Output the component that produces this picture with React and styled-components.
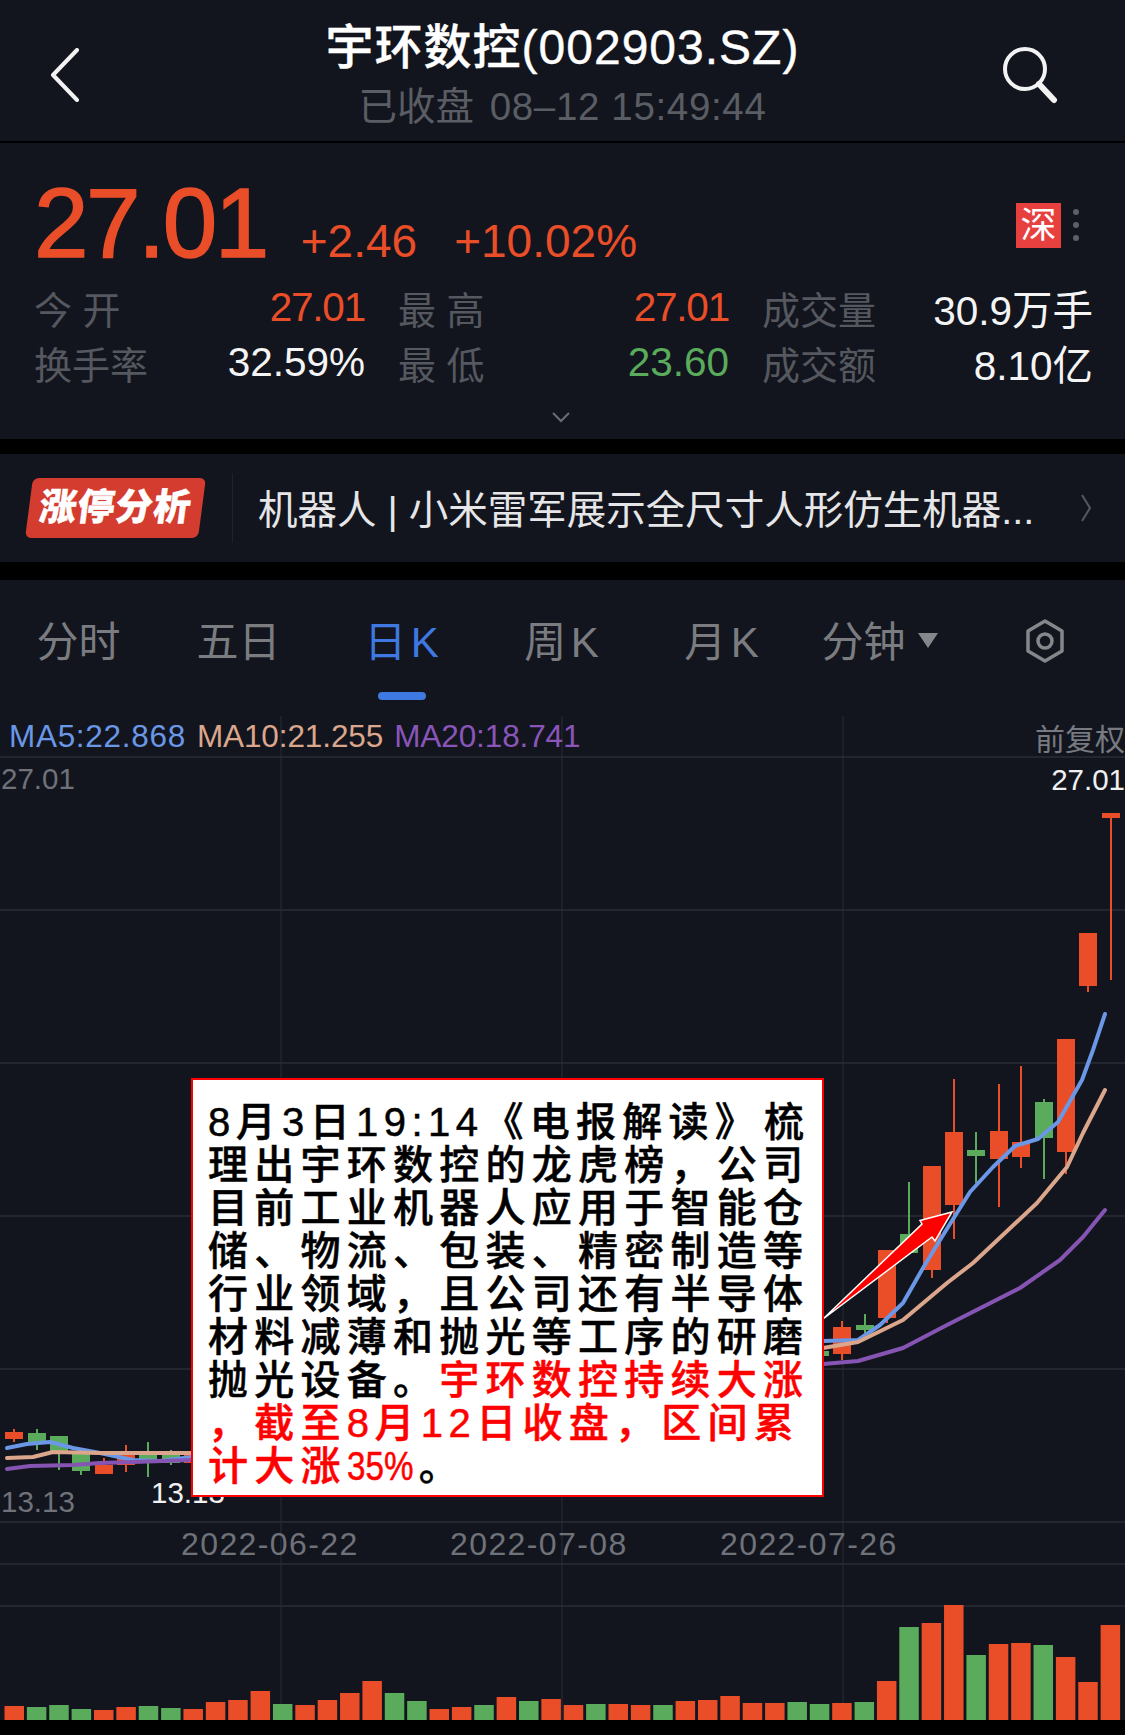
import React from 'react';
import styled, { createGlobalStyle } from 'styled-components';

const BG = '#12151e';
const RED = '#e94e29';
const GREEN = '#5aab5b';
const GRID = '#2a2d35';
const CJK = '"Liberation Sans", "Noto Sans CJK SC", sans-serif';

const GlobalStyle = createGlobalStyle`
  html, body { margin: 0; padding: 0; background: #000; }
  * { box-sizing: border-box; }
`;

// 蜡烛图数据: [中心x, 实体上, 实体下, 影线上, 影线下, 颜色]
const candles = [
  [14, 1432, 1439, 1429, 1442, RED],
  [37, 1433, 1443, 1429, 1450, GREEN],
  [59, 1436, 1451, 1436, 1470, GREEN],
  [81, 1454, 1471, 1454, 1475, GREEN],
  [104, 1465, 1474, 1458, 1474, RED],
  [126, 1453, 1465, 1445, 1472, RED],
  [148, 1453, 1459, 1442, 1477, GREEN],
  [171, 1455, 1463, 1450, 1465, GREEN],
  [193, 1454, 1463, 1450, 1465, RED],
  [820, 1351, 1356, 1351, 1356, GREEN],
  [842, 1327, 1354, 1321, 1360, RED],
  [865, 1325, 1330, 1314, 1333, GREEN],
  [887, 1250, 1318, 1250, 1323, RED],
  [909, 1234, 1253, 1182, 1253, GREEN],
  [932, 1166, 1270, 1166, 1278, RED],
  [954, 1132, 1205, 1079, 1239, RED],
  [976, 1150, 1156, 1132, 1183, GREEN],
  [999, 1131, 1159, 1084, 1207, RED],
  [1021, 1142, 1157, 1066, 1168, RED],
  [1044, 1102, 1138, 1099, 1179, GREEN],
  [1066, 1039, 1152, 1039, 1174, RED],
  [1088, 933, 986, 933, 992, RED],
  [1111, 813, 818, 813, 980, RED],
];

// 成交量: [柱顶y, 颜色]
const volumes = [
  [1706, RED], [1707, GREEN], [1705, GREEN], [1709, GREEN], [1710, RED],
  [1707, RED], [1706, GREEN], [1708, GREEN], [1709, RED], [1702, RED],
  [1700, RED], [1691, RED], [1704, GREEN], [1705, RED], [1700, RED],
  [1693, RED], [1681, RED], [1693, GREEN], [1701, GREEN], [1709, RED],
  [1707, RED], [1705, GREEN], [1697, RED], [1701, GREEN], [1699, RED],
  [1705, RED], [1704, GREEN], [1704, RED], [1705, RED], [1705, GREEN],
  [1701, RED], [1700, RED], [1696, RED], [1703, RED], [1703, RED],
  [1702, GREEN], [1704, GREEN], [1703, RED], [1702, GREEN], [1681, RED],
  [1627, GREEN], [1623, RED], [1605, RED], [1655, GREEN], [1644, RED],
  [1643, RED], [1645, GREEN], [1657, RED], [1682, RED], [1625, RED],
];

const lines = [
  {
    color: '#6a97e6',
    left: '7,1448 27,1444 50,1442 73,1448 100,1453 133,1460 160,1461 192,1457',
    right: '823,1341 858,1340 880,1325 903,1303 923,1268 940,1240 970,1192 993,1167 1015,1146 1038,1139 1058,1122 1082,1080 1093,1050 1105,1014',
  },
  {
    color: '#dba68b',
    left: '7,1458 33,1457 53,1452 100,1453 192,1453',
    right: '823,1348 858,1342 903,1320 947,1283 973,1263 1037,1203 1067,1167 1083,1133 1105,1090',
  },
  {
    color: '#8655b4',
    left: '7,1469 30,1466 73,1465 100,1463 133,1462 192,1460',
    right: '823,1364 858,1361 903,1348 947,1325 1020,1288 1060,1260 1083,1237 1105,1210',
  },
];

function BackIcon() {
  return (
    <svg width="30" height="54" viewBox="0 0 30 54" fill="none">
      <path d="M27 2 L3 27 L27 52" stroke="#f2f2f2" strokeWidth="4" strokeLinecap="round" strokeLinejoin="round" />
    </svg>
  );
}

function SearchIcon() {
  return (
    <svg width="56" height="58" viewBox="0 0 56 58" fill="none">
      <circle cx="23" cy="23" r="20" stroke="#f2f2f2" strokeWidth="4" />
      <path d="M37 38 L52 54" stroke="#f2f2f2" strokeWidth="6" strokeLinecap="round" />
    </svg>
  );
}

function SettingsIcon() {
  return (
    <svg width="40" height="44" viewBox="0 0 40 44" fill="none">
      <path d="M20 2 L37 12 L37 32 L20 42 L3 32 L3 12 Z" stroke="#85878b" strokeWidth="3.5" strokeLinejoin="round" />
      <circle cx="20" cy="22" r="7" stroke="#85878b" strokeWidth="3.5" />
    </svg>
  );
}

function ChartDrawing() {
  return (
    <ChartSvg viewBox="0 716 1125 1004" width="1125" height="1004">
      {[757, 910, 1063, 1216, 1369, 1522, 1564, 1606].map((y) => (
        <line key={y} x1="0" x2="1125" y1={y} y2={y} stroke={GRID} strokeWidth="1.5" />
      ))}
      {[281, 562, 843].map((x) => (
        <line key={x} x1={x} x2={x} y1="716" y2="1720" stroke={GRID} strokeWidth="1" />
      ))}
      {candles.map(([cx, top, bottom, hi, lo, color]) => (
        <g key={cx}>
          <line x1={cx} x2={cx} y1={hi} y2={lo} stroke={color} strokeWidth="2" />
          <rect x={cx - 9} y={top} width="18" height={bottom - top} fill={color} />
        </g>
      ))}
      {lines.map((l) => (
        <g key={l.color} fill="none" stroke={l.color} strokeWidth="4" strokeLinejoin="round" strokeLinecap="round">
          <polyline points={l.left} />
          <polyline points={l.right} />
        </g>
      ))}
      {volumes.map(([top, color], i) => (
        <rect key={i} x={4.5 + i * 22.37} y={top} width="19.5" height={1720 - top} fill={color} />
      ))}
      <polygon
        points="823,1319 922,1224 920,1220.5 952,1212 935,1241 932,1237"
        fill="#f00"
        stroke="#fff"
        strokeWidth="1.5"
        strokeLinejoin="miter"
      />
    </ChartSvg>
  );
}

function App() {
  return (
    <Page>
      <GlobalStyle />
      <Header>
        <BackSlot><BackIcon /></BackSlot>
        <TitleBlock>
          <Title>宇环数控(002903.SZ)</Title>
          <SubTitle>已收盘 <SubTime>08–12 15:49:44</SubTime></SubTitle>
        </TitleBlock>
        <SearchSlot><SearchIcon /></SearchSlot>
      </Header>

      <Quote>
        <PriceRow>
          <Price>27.01</Price>
          <Change>+2.46</Change>
          <Change>+10.02%</Change>
          <MarketBadge>深</MarketBadge>
          <Dots><i /><i /><i /></Dots>
        </PriceRow>
        <StatGrid>
          <Stat><StatLabel>今 开</StatLabel><StatValue $color={RED} $tight>27.01</StatValue></Stat>
          <Stat><StatLabel>最 高</StatLabel><StatValue $color={RED} $tight>27.01</StatValue></Stat>
          <Stat><StatLabel>成交量</StatLabel><StatValue>30.9万手</StatValue></Stat>
          <Stat><StatLabel>换手率</StatLabel><StatValue>32.59%</StatValue></Stat>
          <Stat><StatLabel>最 低</StatLabel><StatValue $color={GREEN}>23.60</StatValue></Stat>
          <Stat><StatLabel>成交额</StatLabel><StatValue>8.10亿</StatValue></Stat>
        </StatGrid>
        <ExpandRow>
          <svg width="20" height="12" viewBox="0 0 20 12" fill="none">
            <path d="M2 2 L10 10 L18 2" stroke="#6b6e74" strokeWidth="2" />
          </svg>
        </ExpandRow>
      </Quote>

      <Banner>
        <BannerBadge><span>涨停分析</span></BannerBadge>
        <BannerDivider />
        <BannerText>机器人 | 小米雷军展示全尺寸人形仿生机器...</BannerText>
        <svg width="12" height="28" viewBox="0 0 12 28" fill="none">
          <path d="M2 1 L10 14 L2 27" stroke="#55585e" strokeWidth="2" />
        </svg>
      </Banner>

      <Tabs>
        <Tab>分时</Tab>
        <Tab>五日</Tab>
        <Tab $active>日 K</Tab>
        <Tab>周 K</Tab>
        <Tab>月 K</Tab>
        <MinuteTab>分钟<Caret /></MinuteTab>
        <SettingsSlot><SettingsIcon /></SettingsSlot>
      </Tabs>

      <ChartArea>
        <ChartDrawing />
        <Legend>
          <LegendItem $color="#6a97e6" $spacing={0.7}>MA5:22.868</LegendItem>
          <LegendItem $color="#dba68b" $spacing={-0.1}>MA10:21.255</LegendItem>
          <LegendItem $color="#8a55b8" $spacing={-0.1}>MA20:18.741</LegendItem>
          <Adjust>前复权</Adjust>
        </Legend>
        <AxisLabel $top={46} $left={1}>27.01</AxisLabel>
        <AxisLabel $top={47} $right={0} $light>27.01</AxisLabel>
        <AxisLabel $top={769} $left={1}>13.13</AxisLabel>
        <AxisLabel $top={760} $left={151} $light>13.13</AxisLabel>
        <DateLabel $left={181}>2022-06-22</DateLabel>
        <DateLabel $left={450}>2022-07-08</DateLabel>
        <DateLabel $left={720}>2022-07-26</DateLabel>

        <NoteBox>
          <NoteLine><Digit>8</Digit>月<Digit>3</Digit>日<Digit>19:14</Digit>《电报解读》<Nudge>梳</Nudge></NoteLine>
          <NoteLine>理出宇环数控的龙虎榜，公司</NoteLine>
          <NoteLine>目前工业机器人应用于智能仓</NoteLine>
          <NoteLine>储、物流、包装、精密制造等</NoteLine>
          <NoteLine>行业领域，且公司还有半导体</NoteLine>
          <NoteLine>材料减薄和抛光等工序的研磨</NoteLine>
          <NoteLine>抛光设备。<Hot>宇环数控持续大涨</Hot></NoteLine>
          <NoteLine><Hot>，截至<Digit>8</Digit>月<Digit>12</Digit>日收盘，区间累</Hot></NoteLine>
          <NoteLine><Hot>计大涨<Tight>35%</Tight></Hot>。</NoteLine>
        </NoteBox>
      </ChartArea>
    </Page>
  );
}

const Page = styled.div`
  width: 1125px;
  height: 1735px;
  overflow: hidden;
  background: #000;
  display: flex;
  flex-direction: column;
  font-family: ${CJK};
`;

const Header = styled.header`
  height: 143px;
  flex: none;
  display: grid;
  grid-template-columns: 1fr auto 1fr;
  background: ${BG};
  border-bottom: 2px solid #000;
`;

const BackSlot = styled.div`
  padding: 48px 0 0 50px;
`;

const SearchSlot = styled.div`
  justify-self: end;
  padding: 46px 67px 0 0;
`;

const TitleBlock = styled.div`
  padding-top: 18px;
  text-align: center;
`;

const Title = styled.div`
  font-size: 48px;
  line-height: 60px;
  font-weight: 500;
  color: #fff;
  letter-spacing: 1px;
  -webkit-text-stroke: 0.4px #fff;
`;

const SubTitle = styled.div`
  margin-top: 7px;
  font-size: 38.5px;
  line-height: 44px;
  color: #5a5d63;
`;

const SubTime = styled.span`
  letter-spacing: 0.65px;
  margin-left: 5px;
`;

const Quote = styled.section`
  height: 296px;
  flex: none;
  padding: 30px 48px 0 34px;
  background: ${BG};
`;

const PriceRow = styled.div`
  height: 100px;
  display: flex;
  align-items: baseline;
`;

const Price = styled.div`
  font-size: 98px;
  line-height: 100px;
  font-weight: 500;
  letter-spacing: -2.5px;
  color: ${RED};
  margin-right: 34px;
  -webkit-text-stroke: 1.5px ${RED};
`;

const Change = styled.div`
  font-size: 46px;
  line-height: 100px;
  color: ${RED};
  margin-right: 37px;
`;

const MarketBadge = styled.div`
  align-self: flex-start;
  margin: 30px 0 0 auto;
  width: 45px;
  height: 45px;
  background: #e8403f;
  color: #fff;
  font-size: 36px;
  line-height: 45px;
  text-align: center;
`;

const Dots = styled.div`
  align-self: flex-start;
  margin: 36px -2px 0 12px;
  display: flex;
  flex-direction: column;
  gap: 7px;

  i {
    display: block;
    width: 6px;
    height: 6px;
    border-radius: 50%;
    background: #5d6066;
  }
`;

const StatGrid = styled.div`
  margin-top: 7px;
  display: grid;
  grid-template-columns: repeat(3, 331px);
  column-gap: 33px;
`;

const Stat = styled.div`
  height: 55px;
  display: flex;
  justify-content: space-between;
  align-items: center;
`;

const StatLabel = styled.span`
  font-size: 38px;
  color: #55585e;
`;

const StatValue = styled.span`
  font-size: 40.5px;
  letter-spacing: ${(p) => (p.$tight ? '-1.2px' : '0')};
  color: ${(p) => p.$color || '#f4f4f4'};
`;

const ExpandRow = styled.div`
  margin-top: 21px;
  padding-left: 11px;
  display: flex;
  justify-content: center;
`;

const Banner = styled.section`
  margin-top: 15px;
  height: 108px;
  flex: none;
  display: flex;
  align-items: center;
  padding: 0 33px 0 29px;
  background: ${BG};
`;

const BannerBadge = styled.div`
  width: 173px;
  height: 60px;
  transform: skewX(-7.5deg);
  border-radius: 6px;
  background: #d33c2e;
  display: flex;
  align-items: center;
  justify-content: center;
  flex: none;

  span {
    color: #fff;
    font-size: 37px;
    font-weight: 900;
    line-height: 60px;
    letter-spacing: 1px;
    -webkit-text-stroke: 0.5px #fff;
  }
`;

const BannerDivider = styled.div`
  width: 1px;
  height: 70px;
  margin: 0 25px 0 30px;
  background: #20232b;
`;

const BannerText = styled.div`
  flex: 1;
  margin-top: -4px;
  color: #e6e6e8;
  font-size: 39.5px;
  white-space: nowrap;
`;

const Tabs = styled.nav`
  margin-top: 18px;
  height: 136px;
  flex: none;
  display: flex;
  padding: 39px 0 0 0;
  background: ${BG};
`;

const Tab = styled.div`
  position: relative;
  width: 160px;
  margin-left: ${(p) => (p.$active ? '3px' : '0')};
  height: 48px;
  text-align: center;
  font-size: 42px;
  line-height: 48px;
  word-spacing: -7px;
  color: ${(p) => (p.$active ? '#3f78e0' : '#7a7c80')};

  &:first-child {
    margin-left: -1.5px;
  }

  &::after {
    content: '';
    display: ${(p) => (p.$active ? 'block' : 'none')};
    position: absolute;
    left: 50%;
    bottom: -33px;
    width: 48px;
    height: 8px;
    margin-left: -24px;
    border-radius: 4px;
    background: #3f78e0;
  }
`;

const MinuteTab = styled.div`
  display: flex;
  align-items: center;
  gap: 12px;
  height: 48px;
  margin-left: 20px;
  font-size: 42px;
  line-height: 48px;
  color: #7a7c80;
`;

const Caret = styled.i`
  display: block;
  width: 0;
  height: 0;
  margin-top: -6px;
  border-left: 10px solid transparent;
  border-right: 10px solid transparent;
  border-top: 15px solid #85878b;
`;

const SettingsSlot = styled.div`
  margin-left: auto;
  padding: 0 60px 0 0;
`;

const ChartArea = styled.section`
  position: relative;
  width: 1125px;
  height: 1004px;
  flex: none;
  background: ${BG};
`;

const ChartSvg = styled.svg`
  position: absolute;
  inset: 0;
  display: block;
`;

const Legend = styled.div`
  position: relative;
  height: 41px;
  display: flex;
  align-items: center;
  gap: 11px;
  padding-left: 9px;
`;

const LegendItem = styled.span`
  font-size: 31.5px;
  letter-spacing: ${(p) => p.$spacing}px;
  color: ${(p) => p.$color};
`;

const Adjust = styled.span`
  margin-left: auto;
  font-size: 30px;
  color: #777a80;
`;

const AxisLabel = styled.span`
  position: absolute;
  top: ${(p) => p.$top}px;
  left: ${(p) => (p.$left !== undefined ? `${p.$left}px` : 'auto')};
  right: ${(p) => (p.$right !== undefined ? `${p.$right}px` : 'auto')};
  font-size: 29.5px;
  line-height: 34px;
  color: ${(p) => (p.$light ? '#f0f0f0' : '#6f7278')};
`;

const DateLabel = styled.span`
  position: absolute;
  top: 811px;
  left: ${(p) => p.$left}px;
  font-size: 32px;
  line-height: 34px;
  letter-spacing: 1.4px;
  color: #6f7278;
`;

const NoteBox = styled.div`
  position: absolute;
  left: 191px;
  top: 362px;
  width: 633px;
  height: 419px;
  padding: 21px 0 0 15px;
  background: #fff;
  border: 2.5px solid #f00;
`;

const NoteLine = styled.div`
  height: 43px;
  font-size: 40px;
  line-height: 43px;
  font-weight: 500;
  letter-spacing: 6.25px;
  white-space: nowrap;
  color: #000;
  -webkit-text-stroke: 0.5px currentColor;
`;

const Hot = styled.span`
  color: #f00;
`;

const Digit = styled.span`
  letter-spacing: 5.5px;
`;

const Nudge = styled.span`
  margin-left: 3px;
`;

const Tight = styled.span`
  display: inline-block;
  letter-spacing: 0;
  transform: scaleX(0.83);
  transform-origin: left center;
  margin-right: -8px;
`;

export default App;
